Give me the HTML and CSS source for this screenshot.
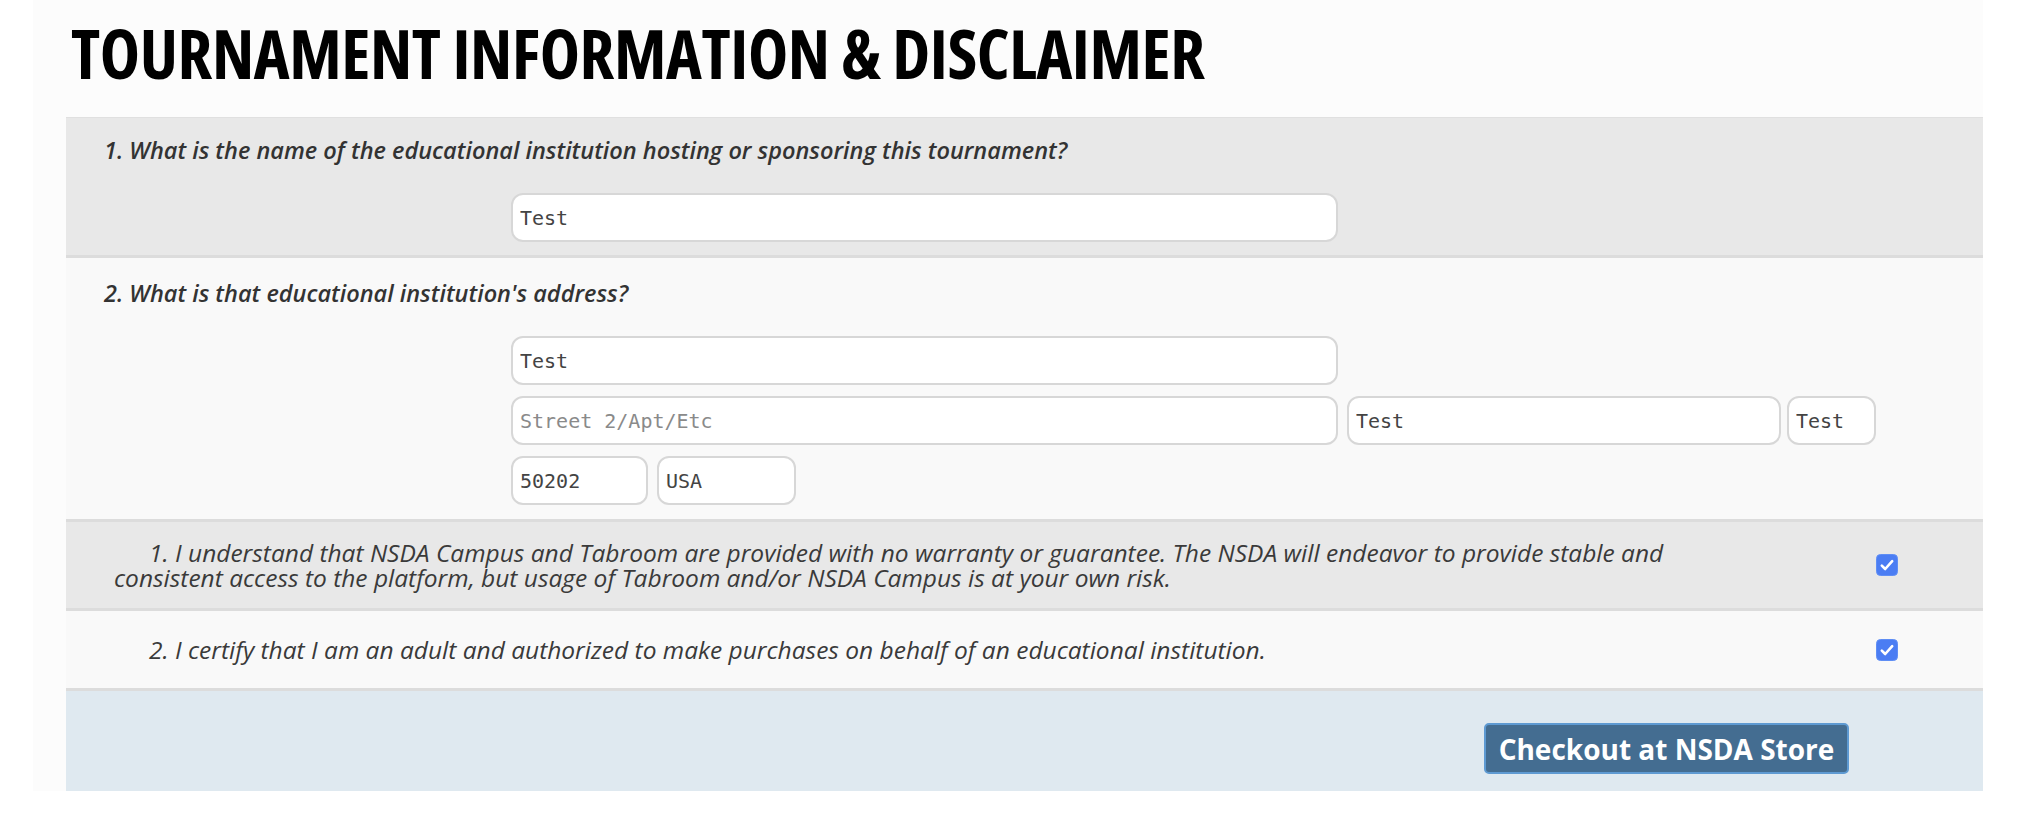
FILE: index.html
```html
<!DOCTYPE html>
<html lang="en">
<head>
<meta charset="utf-8">
<title>Tournament Information &amp; Disclaimer</title>
<link rel="stylesheet" href="styles.css">
</head>
<body>
<div class="page">
  <header class="head">
    <h1 class="title">TOURNAMENT INFORMATION &amp; DISCLAIMER</h1>
  </header>
  <div class="content">
    <section class="question row-gray">
      <div class="label">1. What is the name of the educational institution hosting or sponsoring this tournament?</div>
      <div class="fields">
        <div class="field-line">
          <input class="inp w-wide" type="text" value="Test">
        </div>
      </div>
    </section>
    <section class="question row-light">
      <div class="label">2. What is that educational institution's address?</div>
      <div class="fields">
        <div class="field-line">
          <input class="inp w-wide" type="text" value="Test">
        </div>
        <div class="field-line">
          <input class="inp w-wide" type="text" placeholder="Street 2/Apt/Etc">
          <input class="inp w-city" type="text" value="Test">
          <input class="inp w-state" type="text" value="Test">
        </div>
        <div class="field-line">
          <input class="inp w-zip" type="text" value="50202">
          <input class="inp w-country" type="text" value="USA">
        </div>
      </div>
    </section>
    <section class="agree row-gray agree-two">
      <p class="agree-text">1. I understand that NSDA Campus and Tabroom are provided with no warranty or guarantee. The NSDA will endeavor to provide stable and consistent access to the platform, but usage of Tabroom and/or NSDA Campus is at your own risk.</p>
      <div class="agree-box">
        <span class="check" role="checkbox" aria-checked="true">
          <svg width="22" height="22" viewBox="0 0 22 22"><rect x="0.5" y="0.5" width="21" height="21" rx="4" fill="#4b7df3" stroke="#5f8ef5"/><path d="M5.8 11.6 L9.2 15 L16.2 7.2" fill="none" stroke="#fff" stroke-width="2.6" stroke-linecap="round" stroke-linejoin="round"/></svg>
        </span>
      </div>
    </section>
    <section class="agree row-light agree-one">
      <p class="agree-text">2. I certify that I am an adult and authorized to make purchases on behalf of an educational institution.</p>
      <div class="agree-box">
        <span class="check" role="checkbox" aria-checked="true">
          <svg width="22" height="22" viewBox="0 0 22 22"><rect x="0.5" y="0.5" width="21" height="21" rx="4" fill="#4b7df3" stroke="#5f8ef5"/><path d="M5.8 11.6 L9.2 15 L16.2 7.2" fill="none" stroke="#fff" stroke-width="2.6" stroke-linecap="round" stroke-linejoin="round"/></svg>
        </span>
      </div>
    </section>
    <footer class="actions">
      <button class="checkout" type="button">Checkout at NSDA Store</button>
    </footer>
  </div>
</div>
</body>
</html>
```
FILE: styles.css
```css
html, body {
  margin: 0;
  padding: 0;
  background: #ffffff;
}

.page {
  margin-left: 33px;
  width: 1950px;
  background: #fcfcfc;
  font-family: "Open Sans", "Liberation Sans", sans-serif;
  color: #333;
}

.head {
  height: 117px;
  box-sizing: border-box;
  padding: 19px 0 0 38px;
}

.title {
  margin: 0;
  font-family: "Open Sans", "Liberation Sans", sans-serif;
  font-weight: 700;
  font-stretch: 75%;
  font-size: 68px;
  line-height: 68px;
  color: #000;
  letter-spacing: -0.4px;
  white-space: nowrap;
}

.content {
  margin-left: 33px;
  width: 1917px;
}

.row-gray {
  background: #e8e8e8;
}

.row-light {
  background: #f9f9f9;
}

.question {
  border-bottom: 3px solid #dcdcdc;
  padding: 0 0 0 38px;
}

.question.row-gray {
  border-top: 1px solid #e0e0e0;
  padding-top: 18px;
  padding-bottom: 13px;
}

.question.row-light {
  padding-top: 21px;
  padding-bottom: 14px;
}

.label {
  font-style: italic;
  font-weight: 600;
  font-size: 23.5px;
  line-height: 28px;
  color: #333;
}

.fields {
  margin-left: 407px;
  margin-top: 29px;
  display: flex;
  flex-direction: column;
  gap: 11px;
}

.field-line {
  display: flex;
  align-items: center;
}

.inp {
  height: 49px;
  box-sizing: border-box;
  border: 2px solid #d7d7d7;
  border-radius: 12px;
  background: #fff;
  padding: 0 7px;
  font-family: "DejaVu Sans Mono", "Liberation Mono", monospace;
  font-size: 20px;
  color: #444;
  outline: none;
}

.inp::placeholder {
  color: #8a8a8a;
}

.w-wide { width: 827px; }
.w-city { width: 434px; margin-left: 9px; }
.w-state { width: 89px; margin-left: 6px; }
.w-zip { width: 137px; }
.w-country { width: 139px; margin-left: 9px; }

.agree {
  display: grid;
  grid-template-columns: 1fr 192px;
  align-items: center;
  border-bottom: 3px solid #dcdcdc;
}

.agree-two {
  padding: 18px 0;
}

.agree-one {
  padding: 26px 0;
}

.agree-text {
  margin: 0;
  padding: 0 80px 0 48px;
  text-indent: 35px;
  font-style: italic;
  font-weight: 400;
  font-size: 24.5px;
  line-height: 25px;
  color: #3a3a3a;
}

.agree-box {
  display: flex;
  justify-content: center;
  align-items: center;
}

.check {
  display: block;
  width: 22px;
  height: 22px;
}

.check svg {
  display: block;
}

.actions {
  background: #dfe9f0;
  height: 100px;
  box-sizing: border-box;
  padding: 32px 134px 0 0;
  display: flex;
  justify-content: flex-end;
  align-items: flex-start;
}

.checkout {
  height: 51px;
  width: 365px;
  box-sizing: border-box;
  background: #446d91;
  border: 2px solid #5e9ad2;
  border-radius: 5px;
  color: #fff;
  font-family: "Open Sans", "Liberation Sans", sans-serif;
  font-weight: 700;
  font-size: 28px;
  padding: 0;
  cursor: pointer;
}
```
